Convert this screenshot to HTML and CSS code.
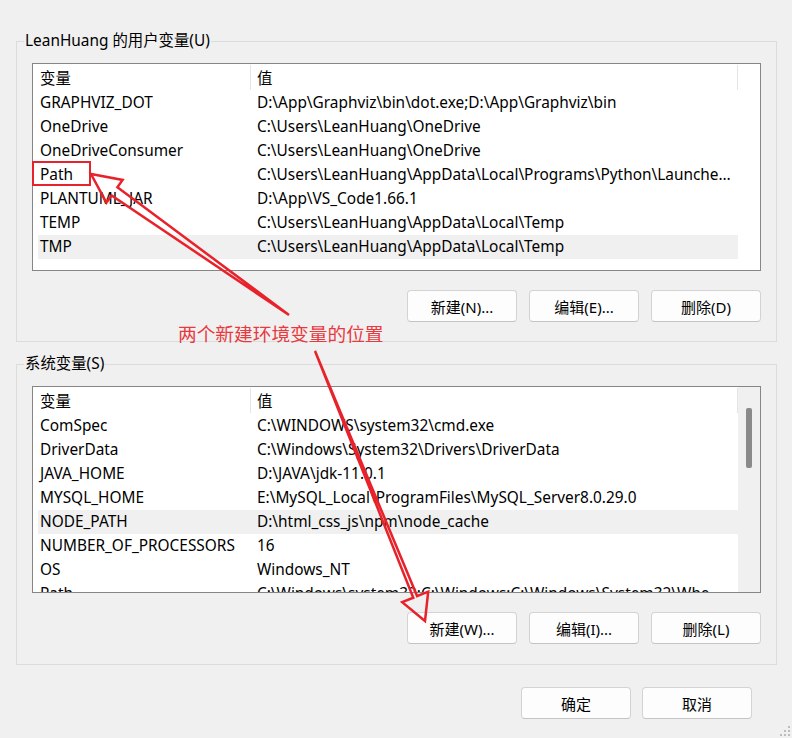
FILE: index.html
```html
<!DOCTYPE html>
<html lang="zh-CN">
<head>
    <meta charset="UTF-8">
    <meta name="viewport" content="width=device-width, initial-scale=1.0">
    <title>环境变量</title>
    <link rel="stylesheet" href="styles.css">
</head>
<body>
    <div class="dialog">
        <fieldset class="group">
            <legend>LeanHuang 的用户变量(U)</legend>
            <div class="list">
                <div class="list-head">
                    <span class="head-name">变量</span>
                    <span class="head-value">值</span>
                </div>
                <div class="row"><span class="name">GRAPHVIZ_DOT</span><span class="value">D:\App\Graphviz\bin\dot.exe;D:\App\Graphviz\bin</span></div>
                <div class="row"><span class="name">OneDrive</span><span class="value">C:\Users\LeanHuang\OneDrive</span></div>
                <div class="row"><span class="name">OneDriveConsumer</span><span class="value">C:\Users\LeanHuang\OneDrive</span></div>
                <div class="row"><span class="name">Path</span><span class="value">C:\Users\LeanHuang\AppData\Local\Programs\Python\Launcher\;C:\Users\LeanHuang\AppData\Local\Microsoft\WindowsApps</span></div>
                <div class="row"><span class="name">PLANTUML_JAR</span><span class="value">D:\App\VS_Code1.66.1</span></div>
                <div class="row"><span class="name">TEMP</span><span class="value">C:\Users\LeanHuang\AppData\Local\Temp</span></div>
                <div class="row selected"><span class="name">TMP</span><span class="value">C:\Users\LeanHuang\AppData\Local\Temp</span></div>
            </div>
            <div class="actions">
                <button class="btn">新建(N)...</button>
                <button class="btn">编辑(E)...</button>
                <button class="btn">删除(D)</button>
            </div>
        </fieldset>

        <fieldset class="group group-system">
            <legend>系统变量(S)</legend>
            <div class="list list-scroll">
                <div class="list-head">
                    <span class="head-name">变量</span>
                    <span class="head-value">值</span>
                </div>
                <div class="row"><span class="name">ComSpec</span><span class="value">C:\WINDOWS\system32\cmd.exe</span></div>
                <div class="row"><span class="name">DriverData</span><span class="value">C:\Windows\System32\Drivers\DriverData</span></div>
                <div class="row"><span class="name">JAVA_HOME</span><span class="value">D:\JAVA\jdk-11.0.1</span></div>
                <div class="row"><span class="name">MYSQL_HOME</span><span class="value">E:\MySQL_Local\ProgramFiles\MySQL_Server8.0.29.0</span></div>
                <div class="row selected"><span class="name">NODE_PATH</span><span class="value">D:\html_css_js\npm\node_cache</span></div>
                <div class="row"><span class="name">NUMBER_OF_PROCESSORS</span><span class="value">16</span></div>
                <div class="row"><span class="name">OS</span><span class="value">Windows_NT</span></div>
                <div class="row"><span class="name">Path</span><span class="value">C:\Windows\system32;C:\Windows;C:\Windows\System32\Wbem;C:\Windows\System32\WindowsPowerShell</span></div>
                <div class="scrollbar"><div class="thumb"></div></div>
            </div>
            <div class="actions">
                <button class="btn">新建(W)...</button>
                <button class="btn">编辑(I)...</button>
                <button class="btn">删除(L)</button>
            </div>
        </fieldset>

        <div class="footer">
            <button class="btn">确定</button>
            <button class="btn">取消</button>
        </div>
    </div>

    <!-- annotation layer drawn over the dialog -->
    <svg class="marks" width="792" height="738" viewBox="0 0 792 738">
        <rect x="33" y="162" width="57" height="23" fill="none" stroke="#e8222a" stroke-width="2"/>
        <polygon points="289,315 117.4,187.2 122.6,179.9 91,174 106.4,202.7 111.6,195.4"
                 fill="none" stroke="#e8222a" stroke-width="2.5" stroke-linejoin="miter"/>
        <polygon points="315,351 417.1,596.1 428.2,591.6 425,621 402.2,602.2 413.3,597.7"
                 fill="none" stroke="#e8222a" stroke-width="2.5" stroke-linejoin="miter"/>
    </svg>
    <div class="note">两个新建环境变量的位置</div>

    <svg class="grip" width="14" height="14" viewBox="0 0 14 14">
        <rect x="10" y="2" width="2" height="2" fill="#bdbdbd"/>
        <rect x="6" y="6" width="2" height="2" fill="#bdbdbd"/>
        <rect x="10" y="6" width="2" height="2" fill="#bdbdbd"/>
        <rect x="2" y="10" width="2" height="2" fill="#bdbdbd"/>
        <rect x="6" y="10" width="2" height="2" fill="#bdbdbd"/>
        <rect x="10" y="10" width="2" height="2" fill="#bdbdbd"/>
    </svg>
</body>
</html>
```

FILE: styles.css
```css
* {
    box-sizing: border-box;
    margin: 0;
    padding: 0;
}

body {
    position: relative;
    width: 792px;
    height: 738px;
    overflow: hidden;
    font-family: "Noto Sans", "Noto Sans CJK SC", sans-serif;
    font-size: 15.4px;
    color: #000;
    background-color: #f0f0f0;
}

.dialog {
    padding: 0 15px 0 16px;
}

/* Group boxes */
.group {
    min-width: 0;
    margin-top: 31px;
    padding: 0 15px 19px 15px;
    border: 1px solid #dcdcdc;
}

.group-system {
    margin-top: 12px;
    padding-bottom: 20px;
}

.group legend {
    margin-left: -8px;
    padding: 0 1px;
    line-height: 20px;
}

/* List views */
.list {
    position: relative;
    margin-top: 12px;
    height: 208px;
    overflow: hidden;
    background-color: #fff;
    border: 1px solid #868686;
}

.list-scroll {
    height: 207px;
}

.list-head {
    display: flex;
    height: 27px;
    margin-left: 5px;
    padding-top: 1px;
}

.head-name,
.head-value {
    height: 25px;
    line-height: 27px;
    border-right: 1px solid #e5e5e5;
}

.head-name {
    width: 213px;
    padding-left: 2px;
}

.head-value {
    width: 487px;
    padding-left: 6px;
}

.row {
    display: flex;
    height: 24px;
    line-height: 24px;
    margin: 0 22px 0 5px;
    white-space: nowrap;
}

.row.selected {
    background-color: #f0f0f0;
}

.row .name {
    flex: 0 0 219px;
    padding-left: 2px;
}

.row .value {
    flex: 1;
    min-width: 0;
    padding-right: 6px;
    overflow: hidden;
    text-overflow: ellipsis;
}

.scrollbar {
    position: absolute;
    top: 0;
    right: 0;
    width: 22px;
    height: 100%;
    background-color: #f0f0f0;
}

.thumb {
    position: absolute;
    top: 21px;
    left: 8px;
    width: 6px;
    height: 60px;
    border-radius: 2px;
    background-color: #8a8a8a;
}

/* Buttons */
.actions {
    display: flex;
    justify-content: flex-end;
    gap: 12px;
    margin-top: 19px;
}

.btn {
    width: 110px;
    height: 32px;
    font-family: inherit;
    font-size: 15px;
    color: #000;
    background-color: #fdfdfd;
    border: 1px solid #d3d3d3;
    border-bottom-color: #c4c4c4;
    border-radius: 4px;
}

.footer {
    display: flex;
    justify-content: flex-end;
    gap: 11px;
    margin-top: 22px;
    padding-right: 25px;
}

/* Annotation */
.marks {
    position: absolute;
    top: 0;
    left: 0;
    pointer-events: none;
}

.note {
    position: absolute;
    top: 320px;
    left: 178px;
    font-size: 18.7px;
    line-height: 28px;
    color: #e8393e;
}

.grip {
    position: absolute;
    right: 0;
    bottom: 0;
}
```
